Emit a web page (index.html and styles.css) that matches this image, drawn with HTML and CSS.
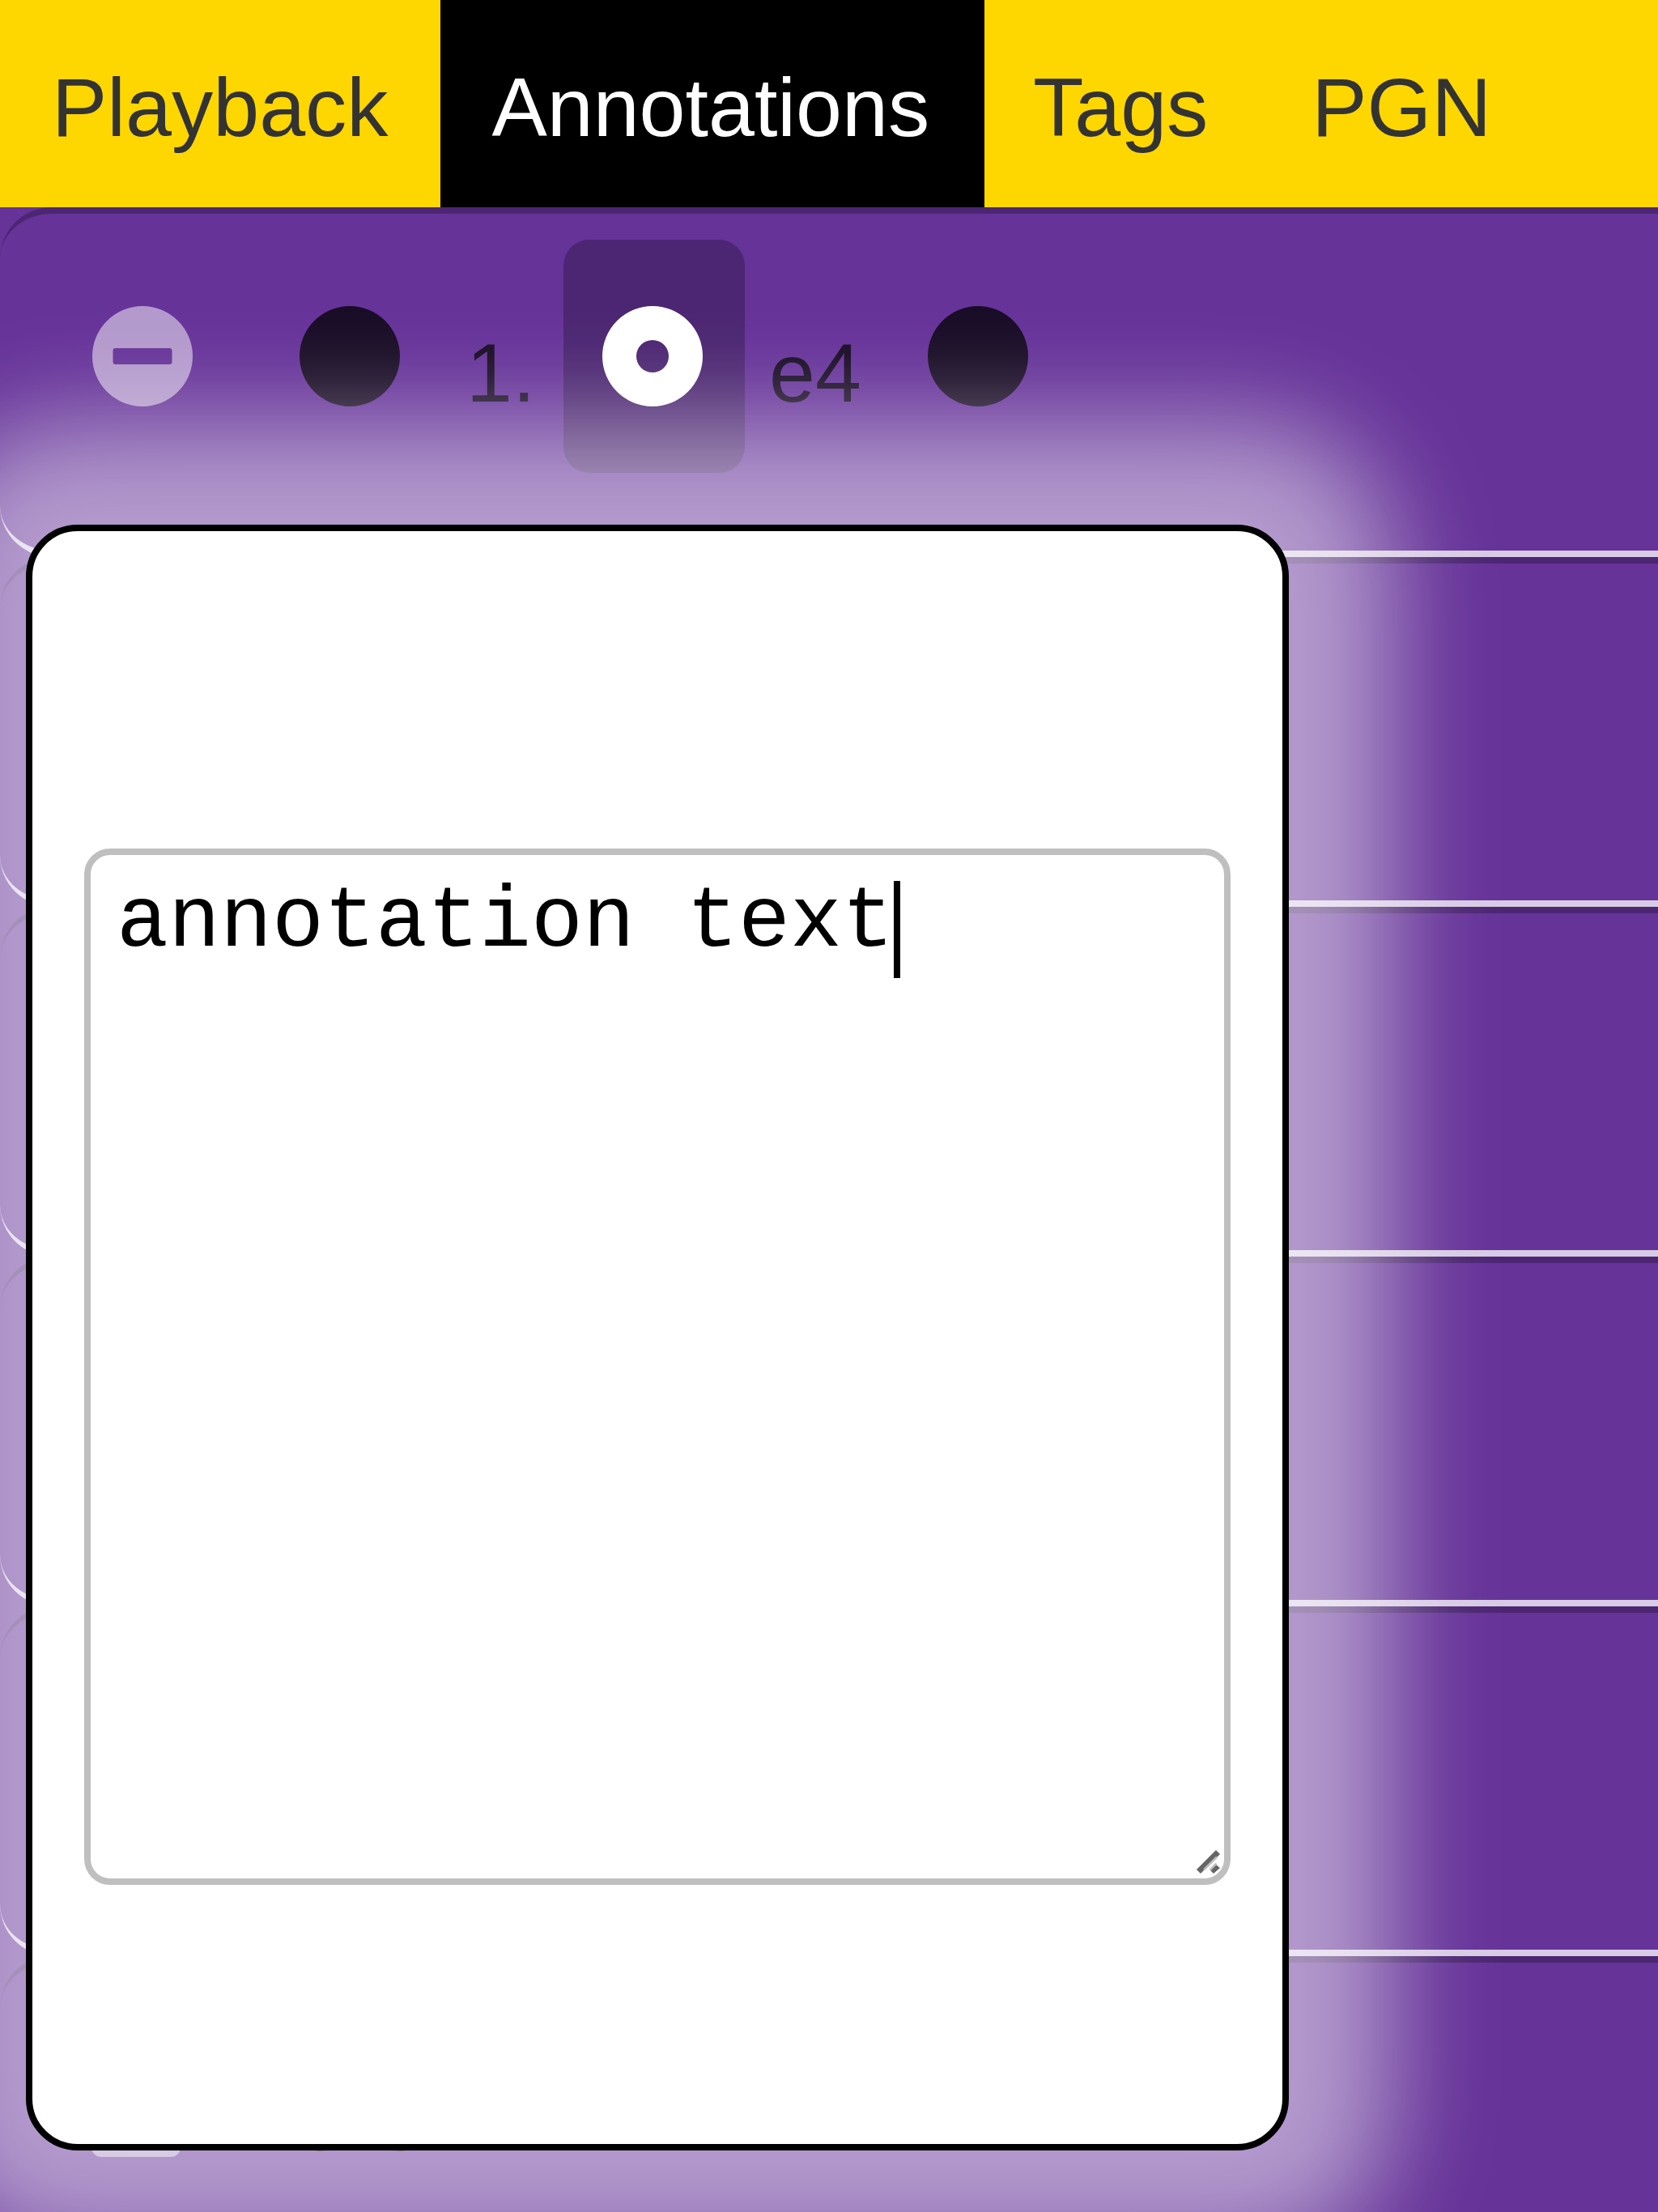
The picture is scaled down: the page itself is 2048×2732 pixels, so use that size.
FILE: index.html
```
<!DOCTYPE html>
<html lang="en">
<head>
<meta charset="utf-8">
<title>Annotations</title>
<link rel="stylesheet" href="styles.css">
</head>
<body>
<nav class="tabs">
  <a class="tab tab-playback">Playback</a>
  <a class="tab tab-annotations active">Annotations</a>
  <a class="tab tab-tags">Tags</a>
  <a class="tab">PGN</a>
</nav>
<main class="moves">
  <div class="row">
    <button class="icon-button muted" aria-label="Remove"><svg viewBox="0 0 124 124"><path fill-rule="evenodd" d="M62 0a62 62 0 1 1 0 124a62 62 0 1 1 0-124ZM28.500 52a3 3 0 0 0-3 3v14a3 3 0 0 0 3 3h67a3 3 0 0 0 3-3v-14a3 3 0 0 0-3-3Z"/></svg></button>
    <button class="icon-button" aria-label="Annotate start"><svg viewBox="0 0 124 124"><circle cx="62" cy="62" r="62"/></svg></button>
    <span class="move number">1.</span>
    <button class="icon-button selected" aria-label="Annotate before move"><svg viewBox="0 0 124 124"><path fill-rule="evenodd" d="M62 0a62 62 0 1 1 0 124a62 62 0 1 1 0-124ZM62 42a20 20 0 1 0 0 40a20 20 0 1 0 0-40Z"/></svg></button>
    <span class="move san">e4</span>
    <button class="icon-button" aria-label="Annotate after move"><svg viewBox="0 0 124 124"><circle cx="62" cy="62" r="62"/></svg></button>
  </div>
  <div class="row"></div>
  <div class="row"></div>
  <div class="row"></div>
  <div class="row"></div>
  <div class="row">
    <button class="icon-button insert" aria-label="Insert"><svg viewBox="0 0 110 128"><rect width="110" height="128" rx="12"/></svg></button>
    <svg class="dots" viewBox="0 0 224 288"><circle cx="75" cy="184" r="17"/><circle cx="174.500" cy="184" r="17"/></svg>
  </div>
</main>
<div class="dialog">
  <div class="editor">
    <span class="text">annotation text</span><span class="caret"></span>
    <svg class="grip" viewBox="0 0 30 30"><path class="grip-dark" d="M24 1L29 6L5 30L0 25ZM24 19L29 23L21 30L17 26Z"/><path class="grip-light" d="M25 9.500L9 25.500M24.500 17.500L16.500 25.500"/></svg>
  </div>
</div>
</body>
</html>
```
FILE: styles.css
```
* { box-sizing: border-box; }
body {
  margin: 0;
  width: 2048px;
  height: 2732px;
  position: relative;
  overflow: hidden;
  background: #639;
  font: 102.4px/1 "Liberation Sans", sans-serif;
}
.tabs {
  display: flex;
  height: 256px;
  background: gold;
}
.tab {
  padding: 9px 64px 0;
  line-height: 247px;
  color: #333;
}
.tab-playback { width: 544px; }
.tab-annotations { width: 672px; padding-left: 63.4px; }
.tab-tags { padding-left: 60px; }
.tab.active { background: #000; color: #fff; }
.row {
  display: flex;
  align-items: flex-start;
  height: 432px;
  padding: 32px 64px 0;
  border-top: 8px solid rgba(0, 0, 0, .25);
  border-bottom: 8px solid rgba(255, 255, 255, .75);
  border-radius: 64px 0 0 64px;
  color: rgba(0, 0, 0, .75);
}
.icon-button {
  display: flex;
  flex: none;
  align-items: center;
  justify-content: center;
  width: 224px;
  height: 288px;
  margin: 0 32px 0 0;
  padding: 0;
  border: 0;
  border-radius: 32px;
  background: none;
  fill: rgba(0, 0, 0, .75);
}
.icon-button svg { display: block; width: 124px; height: 124px; }
.icon-button.muted { fill: rgba(255, 255, 255, .5); }
.icon-button.selected {
  margin-right: 30px;
  padding-right: 5px;
  background: rgba(0, 0, 0, .25);
  fill: #fff;
}
.icon-button.insert { padding-right: 16px; fill: rgba(255, 255, 255, .5); }
.icon-button.insert svg { width: 110px; height: 128px; }
.dots { width: 224px; height: 288px; fill: rgba(0, 0, 0, .75); }
.move { padding-top: 41px; line-height: 247px; }
.number { width: 120px; }
.san { width: 146px; }
.dialog {
  position: absolute;
  left: 32px;
  top: 648px;
  width: 1560px;
  height: 2008px;
  padding: 392px 64px 0;
  border: 8px solid #000;
  border-radius: 64px;
  background: #fff;
  box-shadow: 0 0 128px 128px rgba(255, 255, 255, .5);
}
.editor {
  position: relative;
  display: flex;
  width: 1416px;
  height: 1280px;
  padding: 32px;
  border: 8px solid #bfbfbf;
  border-radius: 32px;
  background: #fff;
  font: 106.667px/120px "Liberation Mono", monospace;
}
.text { margin-top: -8px; white-space: pre; }
.caret { width: 8px; height: 120px; background: #000; }
.grip {
  position: absolute;
  right: 4px;
  bottom: 6px;
  width: 30px;
  height: 30px;
}
.grip-dark { fill: #666; }
.grip-light { fill: none; stroke: #bfbfbf; stroke-width: 2.5; }
```
